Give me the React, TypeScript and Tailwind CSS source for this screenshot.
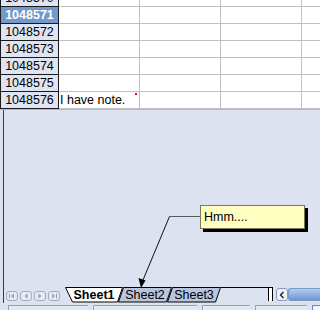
import React from 'react';

const rows = ['1048570', '1048571', '1048572', '1048573', '1048574', '1048575', '1048576'];

function NavButton({ kind }: { kind: 'first' | 'prev' | 'next' | 'last' }) {
  return (
    <div className="w-[12px] h-[10px] rounded-[3px] border border-[#a3aac0] bg-[#e6eaf5] flex items-center justify-center">
      <svg width="8" height="6" viewBox="0 0 8 6">
        {kind === 'first' && (
          <>
            <rect x="1" y="0.5" width="1" height="5" fill="#9aa0b4" />
            <path d="M6 0.5 L3 3 L6 5.5 Z" fill="#9aa0b4" />
          </>
        )}
        {kind === 'prev' && <path d="M5.5 0.5 L2.5 3 L5.5 5.5 Z" fill="#9aa0b4" />}
        {kind === 'next' && <path d="M2.5 0.5 L5.5 3 L2.5 5.5 Z" fill="#9aa0b4" />}
        {kind === 'last' && (
          <>
            <path d="M2 0.5 L5 3 L2 5.5 Z" fill="#9aa0b4" />
            <rect x="6" y="0.5" width="1" height="5" fill="#9aa0b4" />
          </>
        )}
      </svg>
    </div>
  );
}

function Tab({ label, active, width, points }: { label: string; active?: boolean; width: number; points: string }) {
  return (
    <div className={`relative h-[16px] flex items-center justify-center pt-[1px] ${active ? 'z-10' : ''}`} style={{ width }}>
      <svg className="absolute inset-0" width={width} height="16" viewBox={`0 0 ${width} 16`}>
        <polygon points={points} fill={active ? '#ffffff' : '#b9c5dd'} stroke="#000" strokeWidth="1" />
      </svg>
      <span className={`relative text-[12.5px] leading-none text-black ${active ? 'font-bold' : ''}`}>{label}</span>
    </div>
  );
}

export default function App() {
  return (
    <div className="relative w-[320px] h-[310px] overflow-hidden bg-[#dde2f1] font-['Liberation_Sans',Arial,sans-serif] flex flex-col">
      {/* cell grid */}
      <div className="h-[110px] overflow-hidden bg-white border-b border-[#b8b8b8]">
        <div className="mt-[-10px]">
          {rows.map((r, i) => {
            const selected = r === '1048571';
            return (
              <div key={r} className="flex h-[17px]">
                <div
                  className={`w-[59px] shrink-0 border-l border-r border-b border-[#1a1a1a] flex items-center justify-center text-[12.5px] leading-none ${
                    selected ? 'bg-[#7399cc] text-white font-bold' : 'bg-[#dfe4f2] text-black'
                  }`}
                >
                  {r}
                </div>
                <div className="relative w-[81px] shrink-0 border-r border-b border-[#c0c0c0] flex items-center pl-[1px] text-[12.5px] leading-none text-black">
                  {i === rows.length - 1 && (
                    <>
                      <span>I have note.</span>
                      <span className="absolute top-[1px] right-[2px] w-[2px] h-[2px] bg-[#ff0000]" />
                    </>
                  )}
                </div>
                <div className="w-[81px] shrink-0 border-r border-b border-[#c0c0c0]" />
                <div className="w-[81px] shrink-0 border-r border-b border-[#c0c0c0]" />
                <div className="flex-1 border-b border-[#c0c0c0]" />
              </div>
            );
          })}
        </div>
      </div>

      {/* empty area below the last row */}
      <div className="flex-1 pl-[3px]">
        <div className="h-full border-l border-[#3a3a3a]" />
      </div>

      {/* sheet tabs + horizontal scrollbar */}
      <div className="h-[16px] flex items-start">
        <div className="w-[65px] h-full pl-[3px]">
          <div className="h-full border-l border-[#3a3a3a] flex items-center gap-[2px] pl-[2px] pt-[1px]">
            <NavButton kind="first" />
            <NavButton kind="prev" />
            <NavButton kind="next" />
            <NavButton kind="last" />
          </div>
        </div>
        <div className="flex">
          <Tab label="Sheet1" active width={58} points="0.5,0.5 57.5,0.5 52.5,15 7.5,15" />
          <div className="ml-[-5px]">
            <Tab label="Sheet2" width={54} points="5.5,0.5 53.5,0.5 48.5,15 0.5,15" />
          </div>
          <div className="ml-[-5px]">
            <Tab label="Sheet3" width={54} points="5.5,0.5 53.5,0.5 48.5,15 0.5,15" />
          </div>
        </div>
        <div className="w-[47px] h-[14px] border-t border-[#000]" />
        <div className="w-[5px] h-[14px] border-l border-r border-t border-[#000] bg-white" />
        <div className="ml-[3px] mt-[1px] w-[12px] h-[13px] rounded-[3px] border border-[#8a9ab8] bg-[#eef2fa] flex items-center justify-center">
          <svg width="6" height="8" viewBox="0 0 6 8">
            <path d="M4.5 1 L1.5 4 L4.5 7" fill="none" stroke="#1a1a1a" strokeWidth="1.3" />
          </svg>
        </div>
        <div className="flex-1 mt-[1px] h-[13px] rounded-l-[3px] border border-r-0 border-[#7a98c8] bg-gradient-to-b from-[#b4ccee] to-[#6b98d6]" />
      </div>

      {/* status bar */}
      <div className="h-[7px] flex items-start pt-[2px] gap-[5px] pl-[8px]">
        <div className="w-[80px] h-[6px] border-t border-l border-[#9aa2b4] bg-[#e4e8f4]" />
        <div className="w-[104px] h-[6px] border-t border-l border-[#9aa2b4] bg-[#e4e8f4]" />
        <div className="w-[48px] h-[6px] border-t border-l border-[#9aa2b4] bg-[#e4e8f4]" />
        <div className="w-[52px] h-[6px] border-t border-l border-[#9aa2b4] bg-[#e4e8f4]" />
        <div className="w-[8px] h-[6px] border-t border-l border-[#7a7ac8] bg-[#f4f4ff]" />
      </div>

      {/* comment callout */}
      <svg className="absolute left-0 top-0 pointer-events-none" width="320" height="310" viewBox="0 0 320 310">
        <line x1="169.5" y1="216.5" x2="200" y2="216.5" stroke="#5a5a5a" strokeWidth="1" />
        <line x1="169.5" y1="216.5" x2="143" y2="280" stroke="#111" strokeWidth="1" />
        <path d="M141 288 L138.5 278 L145.5 280.5 Z" fill="#000" />
      </svg>
      <div className="absolute left-[200px] top-[205px] w-[105px] h-[24px] bg-[#ffffc0] border border-[#7a7a5a] shadow-[3px_3px_0_0_#000] flex items-center pl-[3px]">
        <span className="text-[12.5px] leading-none text-black">Hmm....</span>
      </div>
    </div>
  );
}
